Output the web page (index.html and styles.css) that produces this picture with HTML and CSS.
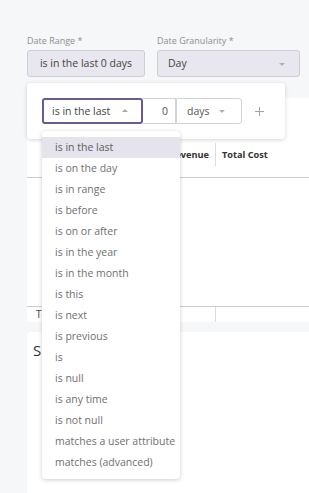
FILE: index.html
```html
<!DOCTYPE html>
<html>
<head>
<meta charset="utf-8">
<link rel="stylesheet" href="styles.css">
</head>
<body>
<div class="page">
  <div class="filters">
    <div class="field f1">
      <label class="lbl">Date Range *</label>
      <div class="input center">is in the last 0 days</div>
    </div>
    <div class="field f2">
      <label class="lbl">Date Granularity *</label>
      <div class="input">Day<span class="caret down"></span></div>
    </div>
  </div>

  <div class="table-card">
    <div class="thead">
      <div class="th c1">Revenue</div>
      <div class="th c2">Total Cost</div>
    </div>
    <div class="tbody"></div>
    <div class="tfoot">
      <div class="tf c1">Totals</div>
      <div class="tf c2"></div>
    </div>
  </div>

  <div class="summary-card">
    <div class="summary-title">Summary</div>
  </div>
</div>

<div class="popover">
  <div class="op-select">is in the last<span class="caret up"></span></div>
  <div class="num">0</div>
  <div class="unit">days<span class="caret down"></span></div>
  <svg class="plus" width="9" height="9" viewBox="0 0 9 9"><path d="M4.5 0v9M0 4.5h9" stroke="#a3a3a3" stroke-width="1" fill="none"/></svg>
</div>

<ul class="menu">
  <li class="active">is in the last</li>
  <li>is on the day</li>
  <li>is in range</li>
  <li>is before</li>
  <li>is on or after</li>
  <li>is in the year</li>
  <li>is in the month</li>
  <li>is this</li>
  <li>is next</li>
  <li>is previous</li>
  <li>is</li>
  <li>is null</li>
  <li>is any time</li>
  <li>is not null</li>
  <li>matches a user attribute</li>
  <li>matches (advanced)</li>
</ul>
</body>
</html>
```
FILE: styles.css
```css
html, body {
  margin: 0;
  padding: 0;
}
body {
  width: 309px;
  height: 493px;
  overflow: hidden;
  background: #f6f7f9;
  font-family: "Open Sans", "Noto Sans", sans-serif;
  color: #444;
  position: relative;
}
.page {
  padding: 35px 0 0 27px;
}
.filters {
  display: flex;
  gap: 12px;
}
.f1 { width: 118px; }
.f2 { width: 143px; }
.lbl {
  display: block;
  font-size: 9px;
  line-height: 12px;
  color: #8e8e8e;
  margin-bottom: 3px;
}
.input {
  position: relative;
  box-sizing: border-box;
  height: 27px;
  border: 1px solid #cfcdd6;
  background: #e8e6ee;
  border-radius: 3px;
  font-size: 10.5px;
  line-height: 25px;
  padding-left: 10px;
  color: #444;
}
.input.center {
  padding-left: 0;
  text-align: center;
}
.caret {
  position: absolute;
  width: 0;
  height: 0;
  border-left: 3.5px solid transparent;
  border-right: 3.5px solid transparent;
}
.caret.down {
  border-top: 3.5px solid #b0b0b0;
}
.caret.up {
  border-bottom: 3.5px solid #a8a8a8;
}
.input .caret.down {
  right: 14px;
  top: 12px;
}

.table-card {
  margin-top: 21px;
  width: 282px;
  height: 224px;
  background: #fff;
  border-radius: 4px 0 0 4px;
  overflow: hidden;
  box-sizing: border-box;
}
.thead {
  display: flex;
  align-items: flex-end;
  height: 80px;
  border-bottom: 1px solid #cdcdd2;
  box-sizing: border-box;
}
.th {
  height: 23px;
  margin-bottom: 11px;
  font-size: 9.2px;
  font-weight: 700;
  line-height: 23px;
  color: #333;
  box-sizing: border-box;
}
.c1 {
  width: 188px;
  text-align: right;
  padding-right: 6px;
  box-sizing: border-box;
}
.th.c2 {
  border-left: 1px solid #dcdce0;
  padding-left: 6px;
}
.tbody {
  height: 128px;
}
.tfoot {
  display: flex;
  border-top: 1px solid #cdcdd2;
  height: 15px;
}
.tf {
  font-size: 10px;
  line-height: 14px;
  color: #444;
}
.tf.c1 {
  text-align: left;
  padding-left: 9px;
}
.tf.c2 {
  border-left: 1px solid #dcdce0;
  flex: 1;
}

.summary-card {
  margin-top: 10px;
  width: 282px;
  height: 161px;
  background: #fff;
  border-radius: 4px 0 0 0;
  padding: 8px 6px;
  box-sizing: border-box;
}
.summary-title {
  font-size: 15px;
  color: #333;
}

.popover {
  position: absolute;
  left: 27px;
  top: 83px;
  width: 258px;
  height: 56px;
  box-sizing: border-box;
  background: #fff;
  border-radius: 4px;
  box-shadow: 0 1px 4px rgba(0, 0, 0, 0.16);
  padding: 15px;
  display: flex;
  align-items: flex-start;
  font-size: 10.5px;
  color: #555;
}
.op-select {
  position: relative;
  width: 101px;
  height: 26px;
  box-sizing: border-box;
  border: 2px solid #6a5a94;
  border-radius: 3px;
  padding-left: 8px;
  line-height: 22px;
  color: #444;
}
.op-select .caret.up {
  right: 13px;
  top: 9px;
}
.num {
  width: 33px;
  height: 26px;
  box-sizing: border-box;
  border: 1px solid #d3d3d6;
  border-left: none;
  text-align: right;
  padding-right: 7px;
  line-height: 24px;
}
.unit {
  position: relative;
  width: 66px;
  height: 26px;
  box-sizing: border-box;
  border: 1px solid #d3d3d6;
  border-radius: 0 3px 3px 0;
  padding-left: 10px;
  line-height: 24px;
}
.unit .caret.down {
  right: 16px;
  top: 11px;
}
.plus {
  margin-left: 13px;
  margin-top: 9px;
}

.menu {
  position: absolute;
  left: 42px;
  top: 131px;
  width: 138px;
  margin: 0;
  padding: 6px 0;
  list-style: none;
  background: #fff;
  border-radius: 4px;
  box-shadow: 0 1px 4px rgba(0, 0, 0, 0.2);
}
.menu li {
  height: 21px;
  line-height: 21px;
  padding-left: 13px;
  font-size: 10.5px;
  color: #707070;
  white-space: nowrap;
}
.menu li.active {
  background: #e5e3ec;
  color: #5e5e5e;
}
```
